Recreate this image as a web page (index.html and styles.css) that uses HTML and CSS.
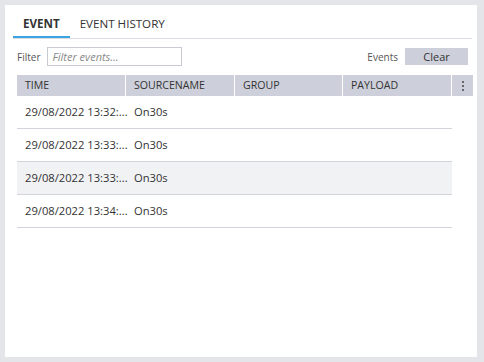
FILE: index.html
```html
<!DOCTYPE html>
<html>
<head>
<meta charset="utf-8">
<link rel="stylesheet" href="styles.css">
</head>
<body>
<div class="panel">
  <div class="tabs">
    <div class="tab active">EVENT</div>
    <div class="tab">EVENT HISTORY</div>
  </div>
  <div class="toolbar">
    <label class="label">Filter</label>
    <input class="filter" type="text" placeholder="Filter events...">
    <div class="spacer"></div>
    <span class="label">Events</span>
    <button class="clear">Clear</button>
  </div>
  <div class="table">
    <div class="thead">
      <div class="th c1">TIME</div>
      <div class="th c2">SOURCENAME</div>
      <div class="th c3">GROUP</div>
      <div class="th c4">PAYLOAD</div>
      <div class="th menu">
        <svg width="4" height="12" viewBox="0 0 4 12"><circle cx="2" cy="2" r="1" fill="#444"/><circle cx="2" cy="6" r="1" fill="#444"/><circle cx="2" cy="10" r="1" fill="#444"/></svg>
      </div>
    </div>
    <div class="row"><div class="td c1">29/08/2022 13:32:...</div><div class="td c2">On30s</div><div class="td c3"></div><div class="td c4"></div></div>
    <div class="row"><div class="td c1">29/08/2022 13:33:...</div><div class="td c2">On30s</div><div class="td c3"></div><div class="td c4"></div></div>
    <div class="row alt"><div class="td c1">29/08/2022 13:33:...</div><div class="td c2">On30s</div><div class="td c3"></div><div class="td c4"></div></div>
    <div class="row"><div class="td c1">29/08/2022 13:34:...</div><div class="td c2">On30s</div><div class="td c3"></div><div class="td c4"></div></div>
  </div>
</div>
</body>
</html>
```
FILE: styles.css
```css
* { box-sizing: border-box; }
html, body { margin: 0; padding: 0; }
body {
  background: #e4e5e9;
  padding: 5px 7px 5px 5px;
  font-family: "Open Sans", "Noto Sans", sans-serif;
  color: #333;
}
.panel {
  background: #fff;
  height: 352px;
  padding: 10px 5px 0 8px;
}
.tabs {
  display: flex;
  border-bottom: 1px solid #dcdde2;
}
.tab {
  font-size: 11.6px;
  line-height: 16px;
  padding: 1px 10px 4px;
  border-bottom: 2px solid transparent;
  color: #333;
}
.tab.active {
  font-weight: 700;
  border-bottom-color: #3ba3e0;
}
.toolbar {
  display: flex;
  align-items: center;
  margin: 8px 0 0 4px;
  height: 19px;
}
.label {
  font-size: 10px;
  color: #555;
}
.filter {
  margin-left: 7px;
  width: 135px;
  height: 19px;
  border: 1px solid #c9cbd4;
  padding: 0 4px;
  font-family: inherit;
  font-size: 11px;
  outline: none;
}
.filter::placeholder {
  font-style: italic;
  color: #8a8a8a;
}
.spacer { flex: 1; }
.clear {
  margin-left: 7px;
  width: 63px;
  height: 17px;
  border: none;
  background: #cdd0da;
  font-family: inherit;
  font-size: 11px;
  color: #333;
  padding: 0;
  margin-right: 4px;
}
.table {
  margin: 9px 0 0 4px;
}
.thead {
  display: flex;
  height: 21px;
  width: 456px;
  background: #cdd0da;
}
.th {
  font-size: 10.6px;
  line-height: 21px;
  padding-left: 8px;
  border-right: 1px solid #fff;
  color: #333;
  white-space: nowrap;
}
.c1 { width: 109px; }
.c2 { width: 109px; }
.c3 { width: 108px; }
.c4 { width: 109px; }
.th.menu {
  width: 21px;
  border-right: none;
  padding: 0;
  display: flex;
  align-items: center;
  justify-content: center;
}
.row {
  display: flex;
  width: 435px;
  height: 33px;
  border-bottom: 1px solid #d3d4db;
}
.row.alt { background: #f1f2f4; }
.td {
  font-size: 11.2px;
  line-height: 32px;
  padding-left: 8px;
  white-space: nowrap;
  color: #333;
}
```
